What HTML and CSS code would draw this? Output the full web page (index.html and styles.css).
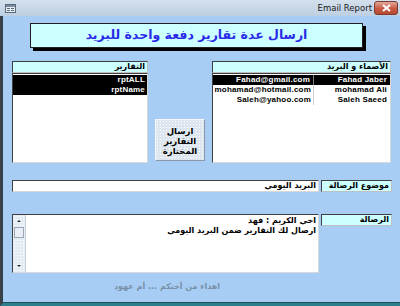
FILE: index.html
```html
<!DOCTYPE html>
<html>
<head>
<meta charset="utf-8">
<link rel="stylesheet" href="styles.css">
</head>
<body>
<div class="window">
  <div class="titlebar">
    <svg class="appicon" width="11" height="9" viewBox="0 0 11 9">
      <rect x="0.5" y="0.5" width="10" height="8" fill="#e8eef4" stroke="#5a6a7a"/>
      <rect x="1" y="1" width="9" height="2" fill="#7a8aa0"/>
      <rect x="2" y="4" width="3" height="1" fill="#5a6a7a"/>
      <rect x="6" y="4" width="3" height="1" fill="#5a6a7a"/>
      <rect x="2" y="6" width="3" height="1" fill="#5a6a7a"/>
      <rect x="6" y="6" width="3" height="1" fill="#5a6a7a"/>
    </svg>
    <span class="wtitle">Email Report</span>
    <div class="closebtn">
      <svg width="9" height="8" viewBox="0 0 9 8"><path d="M1 1 L8 7 M8 1 L1 7" stroke="#fff" stroke-width="2"/></svg>
    </div>
  </div>
  <div class="client">
    <div class="banner" dir="rtl">ارسال عدة تقارير دفعة واحدة للبريد</div>

    <div class="lists">
      <div class="panel reports">
        <div class="label" dir="rtl">التقارير</div>
        <div class="listbox">
          <div class="row sel"><span class="cell">rptALL</span></div>
          <div class="row sel"><span class="cell">rptName</span></div>
        </div>
      </div>
      <div class="sendbtn" dir="rtl">ارسال<br>التقارير<br>المختارة</div>
      <div class="panel names">
        <div class="label" dir="rtl">الأصماء و البريد</div>
        <div class="listbox">
          <div class="row sel"><span class="email">Fahad@gmail.com</span><span class="name">Fahad Jaber</span></div>
          <div class="row"><span class="email">mohamad@hotmail.com</span><span class="name">mohamad Ali</span></div>
          <div class="row"><span class="email">Saleh@yahoo.com</span><span class="name">Saleh Saeed</span></div>
          <div class="colline"></div>
        </div>
      </div>
    </div>

    <div class="field subject">
      <div class="textbox" dir="rtl">البريد اليومي</div>
      <div class="label flabel" dir="rtl">موضوع الرصالة</div>
    </div>

    <div class="field message">
      <div class="textarea">
        <div class="scroll">
          <div class="arrow up"></div>
          <div class="thumb"></div>
          <div class="track"></div>
          <div class="arrow down"></div>
        </div>
        <div class="msgtext" dir="rtl">اخي الكريم : فهد<br>ارصال لك التقارير ضمن البريد اليومي</div>
      </div>
      <div class="label flabel" dir="rtl">الرصالة</div>
    </div>

    <div class="footer" dir="rtl">اهداء من أختكم ... أم عهود</div>
  </div>
</div>
</body>
</html>
```

FILE: styles.css
```css
* { box-sizing: border-box; }
html, body { margin: 0; padding: 0; }
body { width: 400px; height: 306px; overflow: hidden; background: #a8cdf4; }

.window { width: 400px; height: 306px; display: flex; flex-direction: column; }

.titlebar {
  height: 16px;
  display: flex;
  align-items: center;
  background: linear-gradient(#d4e0ec, #bccfe2);
  padding: 0 2px 0 5px;
}
.appicon { display: block; }
.wtitle {
  margin-left: auto;
  font-family: "DejaVu Sans", sans-serif;
  font-size: 8.5px;
  color: #1a1a1a;
  margin-right: 2px;
}
.closebtn {
  width: 24px; height: 14px;
  background: linear-gradient(#e4a898, #c85a44 55%, #b84a32);
  border: 1px solid #7a3a30;
  border-radius: 3px;
  display: flex; align-items: center; justify-content: center;
}
.closebtn svg { display: block; }

.client {
  flex: 1;
  background: #a8cdf4;
  border-left: 3px solid #3a4048;
  border-bottom: 3px solid #2e7f8c;
  box-shadow: inset 0 -1px 0 #1d4f5a;
}

.banner {
  margin: 7px 0 0 27px;
  width: 333px;
  height: 25px;
  background: #ccffff;
  border: 1px solid #202020;
  box-shadow: 3px 3px 0 #000;
  color: #2a2ae8;
  font-family: "DejaVu Sans", sans-serif;
  font-weight: bold;
  font-size: 12.5px;
  display: flex; align-items: center; justify-content: center;
  padding-bottom: 2px;
}

.lists { display: flex; align-items: flex-start; margin-top: 13px; }
.panel { display: flex; flex-direction: column; }
.reports { margin-left: 9px; width: 136px; }
.names { margin-left: 7px; width: 179px; }

.label {
  height: 12px;
  background: #ccffff;
  border: 1px solid #404040;
  border-right-color: #c0c0c0;
  border-bottom-color: #c0c0c0;
  font-family: "DejaVu Sans", sans-serif;
  font-weight: bold;
  font-size: 8px;
  line-height: 10px;
  padding-right: 2px;
  color: #000;
  text-align: right;
  white-space: nowrap;
}

.listbox {
  height: 90px;
  background: #fff;
  border: 1px solid #404040;
  border-right-color: #d8d8d8;
  border-bottom-color: #d8d8d8;
  padding-top: 1px;
  position: relative;
}
.row {
  height: 10px;
  display: flex;
  justify-content: flex-end;
  font-family: "Liberation Sans", sans-serif;
  font-weight: bold;
  font-size: 8px;
  line-height: 10px;
  color: #000;
  letter-spacing: 0.2px;
}
.row.sel { background: #000; color: #fff; }
.cell { padding-right: 2px; }
.email { width: 100px; text-align: right; padding-right: 3px; }
.name { width: 76px; text-align: right; padding-right: 3px; }
.names .row.sel .email { border-right: 1px solid #808080; }
.colline {
  position: absolute;
  left: 100px; top: 11px;
  width: 1px; height: 20px;
  background: #d0d0d0;
}

.sendbtn {
  margin: 58px 0 0 7px;
  width: 50px;
  height: 42px;
  border: 1px solid #f4f8fc;
  border-right-color: #8898a8;
  border-bottom-color: #8898a8;
  background-color: #dde6ef;
  background-image: radial-gradient(#ffffff 0.6px, transparent 0.8px);
  background-size: 3px 3px;
  font-family: "DejaVu Sans", sans-serif;
  font-weight: bold;
  font-size: 8.5px;
  line-height: 10px;
  text-align: center;
  color: #000;
  display: flex; align-items: center; justify-content: center;
  padding-top: 1px;
}

.field { display: flex; align-items: flex-start; margin-left: 9px; }
.subject { margin-top: 17px; }
.message { margin-top: 22px; }
.flabel { width: 71px; margin-left: 2px; }

.textbox {
  width: 307px; height: 12px;
  background: #fff;
  border: 1px solid #404040;
  border-right-color: #d8d8d8;
  border-bottom-color: #d8d8d8;
  font-family: "DejaVu Sans", sans-serif;
  font-weight: bold;
  font-size: 8px;
  line-height: 10px;
  padding-right: 2px;
  text-align: right;
}

.textarea {
  width: 307px; height: 59px;
  background: #fff;
  border: 1px solid #404040;
  border-right-color: #d8d8d8;
  border-bottom-color: #d8d8d8;
  display: flex;
}
.scroll {
  width: 13px;
  display: flex; flex-direction: column;
  background-color: #e4ecf4;
  background-image: radial-gradient(#ffffff 0.6px, transparent 0.8px);
  background-size: 3px 3px;
  border-right: 1px solid #c8d4e0;
}
.arrow { height: 12px; position: relative; }
.arrow::after {
  content: "";
  position: absolute; left: 4px;
  border-left: 2px solid transparent;
  border-right: 2px solid transparent;
}
.arrow.up::after { top: 5px; border-bottom: 2px solid #303030; }
.arrow.down::after { top: 5px; border-top: 2px solid #303030; }
.thumb {
  height: 11px;
  margin: 0 1px;
  background: #e8eef4;
  border: 1px solid #98a8b8;
}
.track { flex: 1; }
.msgtext {
  flex: 1;
  font-family: "DejaVu Sans", sans-serif;
  font-weight: bold;
  font-size: 8px;
  line-height: 10px;
  padding: 1px 2px 0 0;
  text-align: right;
}

.footer {
  margin: 9px 0 0 110px;
  width: 108px;
  font-family: "DejaVu Sans", sans-serif;
  font-weight: bold;
  font-size: 8px;
  color: #7890a8;
  text-align: center;
  white-space: nowrap;
}
```
